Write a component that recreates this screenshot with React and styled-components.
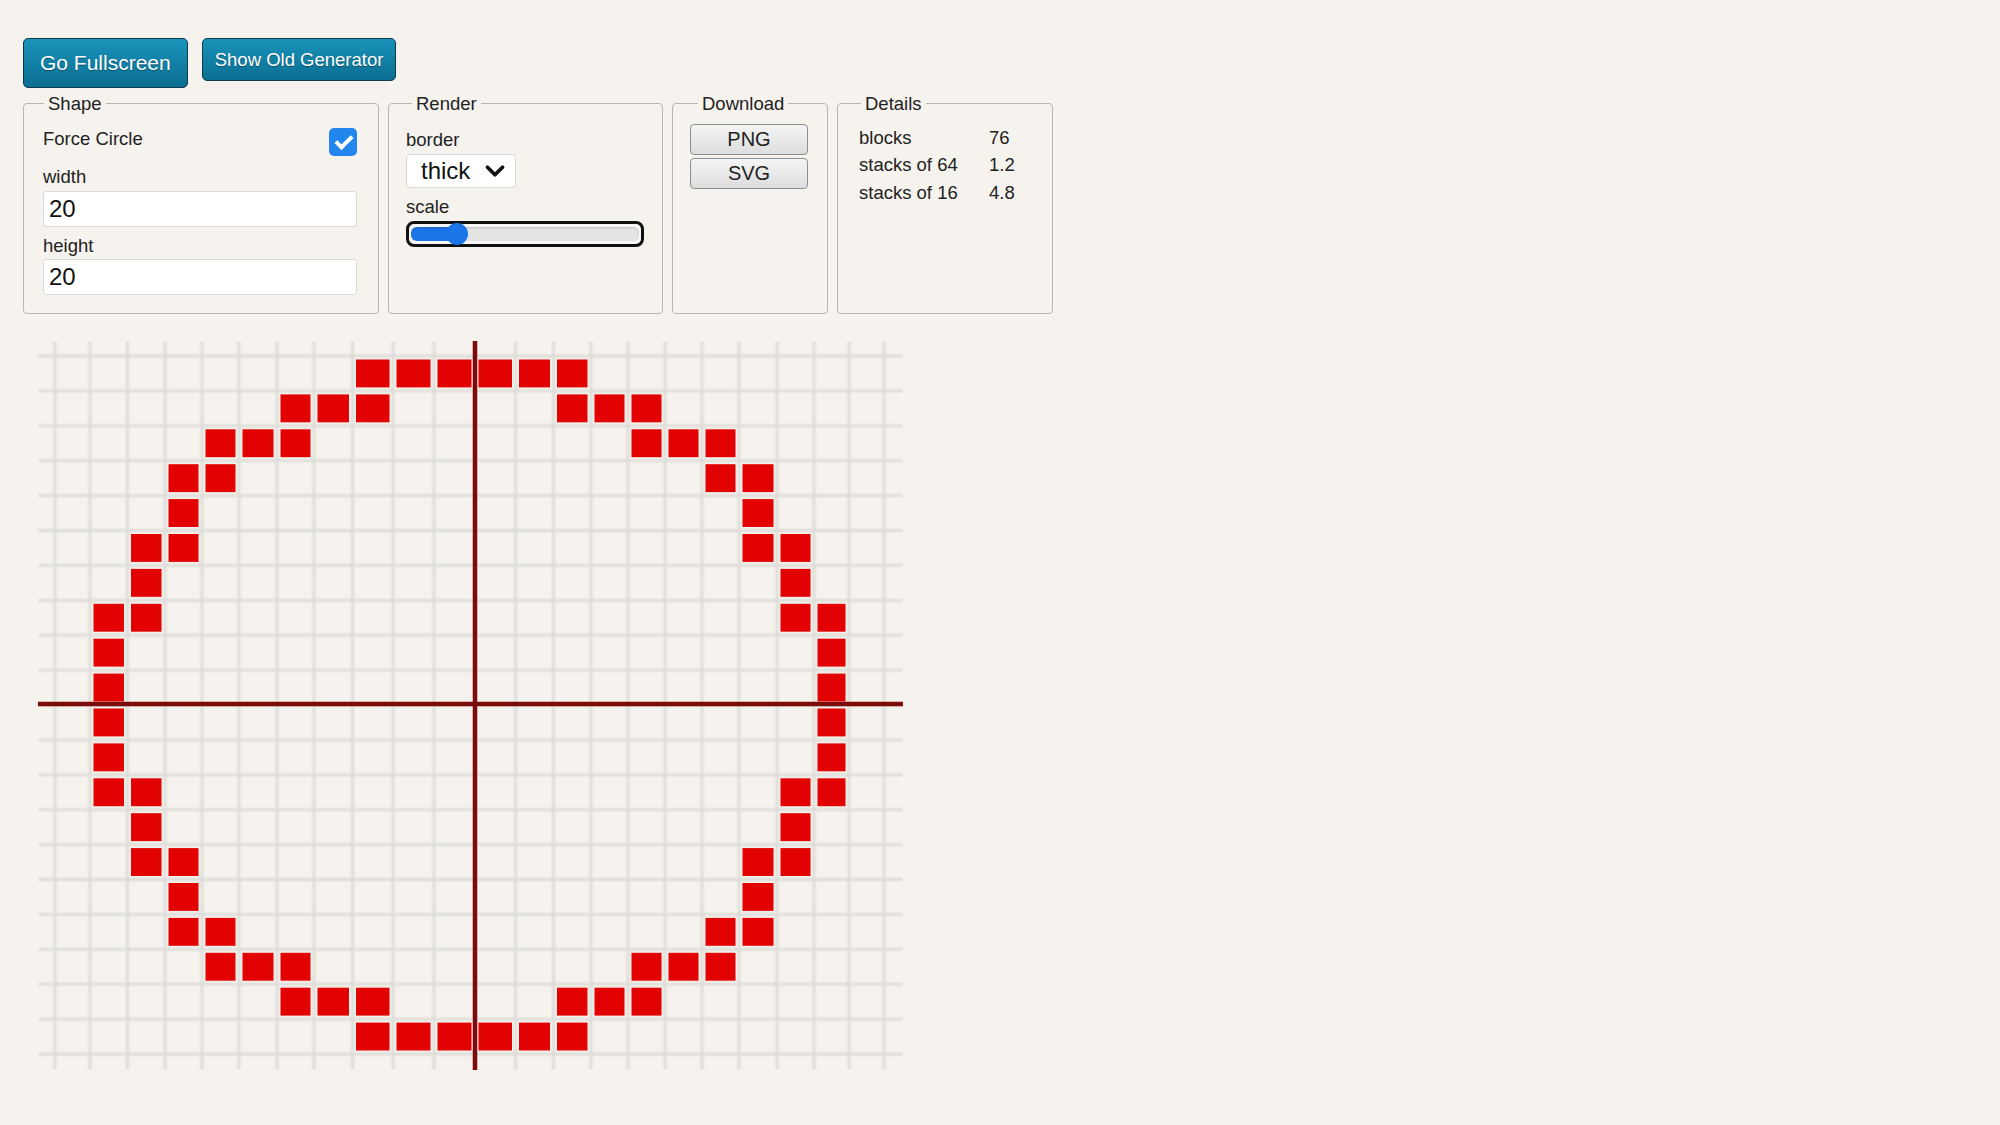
import React, { useState } from "react";
import styled, { createGlobalStyle } from "styled-components";
import { ChevronDown } from "lucide-react";

const GlobalStyle = createGlobalStyle`
  body {
    margin: 0;
    background: #f6f3ee;
    color: #222;
    font-family: "Liberation Sans", Arial, sans-serif;
  }
`;

// one string per row of the 20x20 preview, # = block
const CIRCLE = [
  ".......######.......",
  ".....###....###.....",
  "...###........###...",
  "..##............##..",
  "..#..............#..",
  ".##..............##.",
  ".#................#.",
  "##................##",
  "#..................#",
  "#..................#",
  "#..................#",
  "#..................#",
  "##................##",
  ".#................#.",
  ".##..............##.",
  "..#..............#..",
  "..##............##..",
  "...###........###...",
  ".....###....###.....",
  ".......######.......",
];

// column edges of the preview (the middle columns come out a bit wider)
const COL_X = [
  90, 127.5, 165, 202, 239, 277, 314, 352.5, 393, 434, 475, 515.5, 553.5, 591,
  628, 665, 702, 739, 777, 814, 849,
];
const ROW_H = 34.9;
const ROW_Y = Array.from({ length: 21 }, (_, j) => 355 + j * ROW_H);
const LINE_X = [55, ...COL_X, 884];
const OX = 38;
const OY = 340;
const GRID_W = 865;
const GRID_H = 729;

const countBlocks = (rows) =>
  rows.reduce((n, row) => n + row.split("").filter((c) => c === "#").length, 0);

const Preview = () => {
  const blocks = [];
  CIRCLE.forEach((row, r) =>
    row.split("").forEach((cell, c) => {
      if (cell !== "#") return;
      blocks.push(
        <rect
          key={`${r}-${c}`}
          x={COL_X[c] + 3.5 - OX}
          y={ROW_Y[r] + 3.5 - OY}
          width={COL_X[c + 1] - COL_X[c] - 7}
          height={ROW_H - 7}
          fill="#e20202"
        />
      );
    })
  );

  return (
    <Canvas width={GRID_W} height={GRID_H} viewBox={`0 0 ${GRID_W} ${GRID_H}`}>
      <defs>
        <filter id="soft" x="-5%" y="-5%" width="110%" height="110%">
          <feGaussianBlur stdDeviation="1.2" />
        </filter>
      </defs>
      <g stroke="#dddbd7" strokeWidth="2.8" filter="url(#soft)">
        {LINE_X.map((x) => (
          <line key={`v${x}`} x1={x - OX} y1={0} x2={x - OX} y2={GRID_H} />
        ))}
        {ROW_Y.map((y) => (
          <line key={`h${y}`} x1={0} y1={y - OY} x2={GRID_W} y2={y - OY} />
        ))}
      </g>
      {blocks}
      <g stroke="#7c0b0b" strokeWidth="4.5">
        <line x1={475 - OX} y1={0} x2={475 - OX} y2={GRID_H} />
        <line x1={0} y1={703 - OY} x2={GRID_W} y2={703 - OY} />
      </g>
    </Canvas>
  );
};

const App = () => {
  const [forceCircle, setForceCircle] = useState(true);
  const [width, setWidth] = useState("20");
  const [height, setHeight] = useState("20");
  const [border, setBorder] = useState("thick");
  const [scale, setScale] = useState(17);

  const blocks = countBlocks(CIRCLE);
  const fill = 20;

  return (
    <Page>
      <GlobalStyle />
      <Toolbar>
        <TealButton $big>Go Fullscreen</TealButton>
        <TealButton>Show Old Generator</TealButton>
      </Toolbar>

      <Panels>
        <Panel $width={356}>
          <Legend $shift={1}>Shape</Legend>
          <CheckRow>
            <span>Force Circle</span>
            <Check
              checked={forceCircle}
              onChange={(e) => setForceCircle(e.target.checked)}
            />
          </CheckRow>
          <FieldLabel $gap={9.5}>width</FieldLabel>
          <NumberInput
            $gap={4.5}
            value={width}
            onChange={(e) => setWidth(e.target.value)}
          />
          <FieldLabel $gap={7.5}>height</FieldLabel>
          <NumberInput
            $gap={3.5}
            value={height}
            onChange={(e) => setHeight(e.target.value)}
          />
        </Panel>

        <Panel $width={275} $pad={17}>
          <Legend $shift={6}>Render</Legend>
          <FieldLabel $gap={15}>border</FieldLabel>
          <SelectWrap>
            <Select value={border} onChange={(e) => setBorder(e.target.value)}>
              <option value="thin">thin</option>
              <option value="thick">thick</option>
              <option value="none">none</option>
            </Select>
            <ChevronDown size={30} strokeWidth={3} />
          </SelectWrap>
          <FieldLabel $gap={8}>scale</FieldLabel>
          <Range
            min={0}
            max={100}
            value={scale}
            $fill={fill}
            onChange={(e) => setScale(Number(e.target.value))}
          />
        </Panel>

        <Panel $width={156} $pad={17}>
          <Legend $shift={8}>Download</Legend>
          <GrayButton $gap={9.5}>PNG</GrayButton>
          <GrayButton $gap={3}>SVG</GrayButton>
        </Panel>

        <Panel $width={216} $pad={21}>
          <Legend $shift={2}>Details</Legend>
          <Stats>
            <span>blocks</span>
            <span>{blocks}</span>
            <span>stacks of 64</span>
            <span>{(blocks / 64).toFixed(1)}</span>
            <span>stacks of 16</span>
            <span>{(blocks / 16).toFixed(1)}</span>
          </Stats>
        </Panel>
      </Panels>

      <Preview />
    </Page>
  );
};

export default App;

const Page = styled.div`
  padding: 38px 0 40px 23px;
`;

const Toolbar = styled.div`
  display: flex;
  align-items: flex-start;
  gap: 14px;
`;

const TealButton = styled.button`
  box-sizing: border-box;
  height: ${(p) => (p.$big ? "50px" : "43px")};
  padding: ${(p) => (p.$big ? "0 16px" : "0 12px")};
  border: 1.5px solid #0d3a4c;
  border-radius: 5px;
  background: linear-gradient(#1a93bb, #0b6e91);
  color: #fff;
  font-family: inherit;
  font-size: ${(p) => (p.$big ? "21px" : "18.5px")};
  text-shadow: 0 1px 1px rgba(0, 0, 0, 0.35);
  cursor: pointer;
`;

const Panels = styled.div`
  display: flex;
  align-items: stretch;
  gap: 9px;
  margin-top: 5px;
`;

const Panel = styled.fieldset`
  box-sizing: border-box;
  width: ${(p) => p.$width}px;
  min-width: 0;
  margin: 0;
  padding: 0 ${(p) => p.$pad || 19}px 18px;
  border: 1.5px solid #b9b6b1;
  border-radius: 4px;
  font-size: 18.5px;
`;

const Legend = styled.legend`
  margin-left: ${(p) => p.$shift}px;
  padding: 0 4px;
  font-size: 18.5px;
  line-height: 21px;
`;

const CheckRow = styled.div`
  display: flex;
  justify-content: space-between;
  align-items: flex-start;
  margin-top: 14px;
  padding-right: 2px;
  line-height: 21px;
`;

const Check = styled.input.attrs({ type: "checkbox" })`
  appearance: none;
  -webkit-appearance: none;
  position: relative;
  width: 28px;
  height: 28px;
  margin: 0;
  border-radius: 5px;
  background: #ccc;
  cursor: pointer;

  &:checked {
    background: #2385ee;
  }

  &:checked::after {
    content: "";
    position: absolute;
    left: 10px;
    top: 4px;
    width: 6px;
    height: 13px;
    border: solid #fff;
    border-width: 0 4px 4px 0;
    transform: rotate(45deg);
  }
`;

const FieldLabel = styled.div`
  margin-top: ${(p) => p.$gap}px;
  line-height: 21px;
`;

const NumberInput = styled.input.attrs({ type: "text" })`
  display: block;
  box-sizing: border-box;
  width: 314px;
  height: 36px;
  margin: ${(p) => p.$gap}px 0 0;
  padding: 0 5px;
  border: 1.5px solid #dcdad6;
  border-radius: 3px;
  background: #fff;
  color: #111;
  font-family: inherit;
  font-size: 24px;
  outline: none;
`;

const SelectWrap = styled.div`
  position: relative;
  width: 110px;
  margin-top: 3.5px;

  svg {
    position: absolute;
    right: 6px;
    top: 2px;
    color: #111;
    pointer-events: none;
  }
`;

const Select = styled.select`
  appearance: none;
  -webkit-appearance: none;
  display: block;
  box-sizing: border-box;
  width: 110px;
  height: 34px;
  padding: 0 0 0 14px;
  border: 1.5px solid #d9d7d3;
  border-radius: 4px;
  background: #fff;
  color: #111;
  font-family: inherit;
  font-size: 24px;
  outline: none;
`;

const Range = styled.input.attrs({ type: "range" })`
  appearance: none;
  -webkit-appearance: none;
  display: block;
  box-sizing: border-box;
  width: 238px;
  height: 26px;
  margin: 4px 0 0;
  padding: 0 2px;
  border: 3px solid #111;
  border-radius: 8px;
  background: #f7f7f7;
  outline: none;

  &::-webkit-slider-runnable-track {
    height: 14px;
    border-radius: 6px;
    background: linear-gradient(
      to right,
      #1b75e6 0 ${(p) => p.$fill}%,
      #e4e4e4 ${(p) => p.$fill}% 100%
    );
    box-shadow: inset 0 1px 2px rgba(0, 0, 0, 0.18);
  }

  &::-webkit-slider-thumb {
    -webkit-appearance: none;
    width: 22px;
    height: 22px;
    margin-top: -4px;
    border-radius: 50%;
    background: #1b75e6;
  }
`;

const GrayButton = styled.button`
  display: block;
  box-sizing: border-box;
  width: 118px;
  height: 31px;
  margin-top: ${(p) => p.$gap}px;
  padding: 0;
  border: 1.5px solid #8e8e8e;
  border-radius: 4px;
  background: linear-gradient(#f5f5f5, #dddddd);
  color: #222;
  font-family: inherit;
  font-size: 20px;
  cursor: pointer;
`;

const Stats = styled.div`
  display: grid;
  grid-template-columns: 130px auto;
  grid-auto-rows: 27.5px;
  align-items: center;
  margin-top: 10px;
  font-size: 18.5px;
`;

const Canvas = styled.svg`
  display: block;
  margin: 26.5px 0 0 15px;
`;
